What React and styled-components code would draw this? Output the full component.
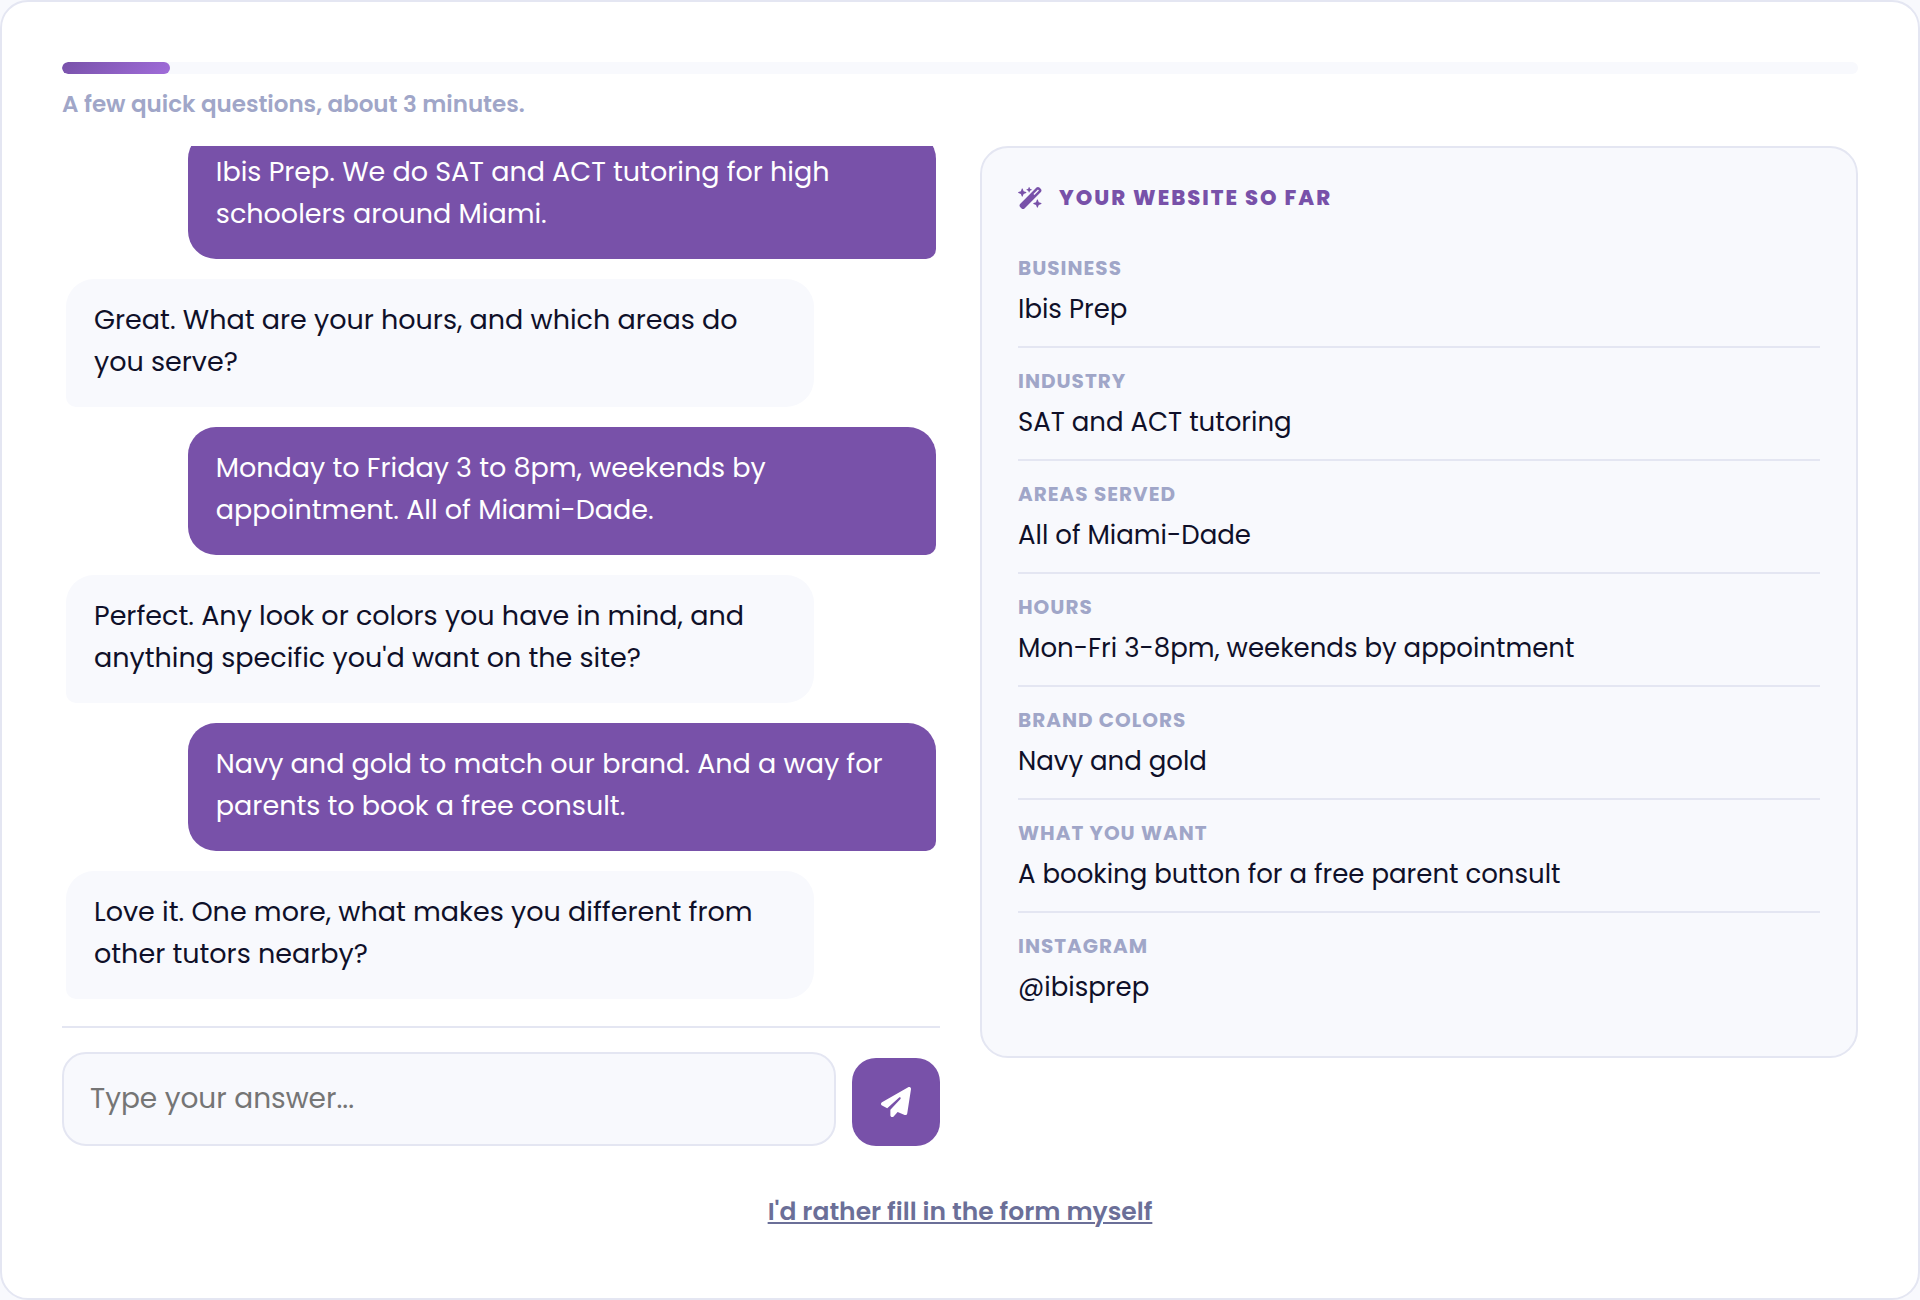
import React, { useLayoutEffect, useRef } from "react";
import styled, { createGlobalStyle } from "styled-components";
import { FaPaperPlane, FaWandMagicSparkles } from "react-icons/fa6";

const color = {
  purple: "#7851a9",
  purpleLight: "#a06cd9",
  surface: "#f8f9fd",
  line: "#e4e6f2",
  ink: "#0f1029",
  muted: "#a0a6c8",
  link: "#6b6f98",
};

const GlobalStyle = createGlobalStyle`
  *, *::before, *::after { box-sizing: border-box; }
  body {
    margin: 0;
    background: ${color.surface};
    color: ${color.ink};
    font-family: Poppins, Inter, "Open Sans", sans-serif;
  }
`;

const Card = styled.main`
  min-height: 100vh;
  padding: 60px;
  background: #fff;
  border: 2px solid ${color.line};
  border-radius: 28px;
`;

const Track = styled.div`
  height: 12px;
  overflow: hidden;
  background: ${color.surface};
  border-radius: 6px;
`;

const Fill = styled.div`
  height: 100%;
  background: linear-gradient(135deg, ${color.purple}, ${color.purpleLight});
  border-radius: 6px;
`;

const Hint = styled.p`
  margin: 12px 0 24px;
  color: ${color.muted};
  font-size: 23px;
  font-weight: 600;
  line-height: 36px;
`;

const Columns = styled.div`
  display: grid;
  grid-template-columns: minmax(0, 1fr) minmax(0, 1fr);
  align-items: start;
  gap: 40px;
`;

const Messages = styled.div`
  display: flex;
  flex-direction: column;
  gap: 20px;
  max-height: 880px;
  padding: 0 4px 27px;
  overflow-y: auto;
  scrollbar-width: none;
`;

const Bubble = styled.p`
  flex: none;
  align-self: ${(p) => (p.$mine ? "flex-end" : "flex-start")};
  width: 86%;
  margin: 0;
  padding: 20px 28px 24px;
  background: ${(p) => (p.$mine ? color.purple : color.surface)};
  border-radius: ${(p) => (p.$mine ? "28px 28px 10px 28px" : "28px 28px 28px 10px")};
  color: ${(p) => (p.$mine ? "#fff" : color.ink)};
  font-size: 27px;
  line-height: 42px;
`;

const Composer = styled.form`
  display: flex;
  align-items: flex-end;
  gap: 16px;
  padding-top: 24px;
  border-top: 2px solid ${color.line};
`;

const Answer = styled.input`
  flex: 1;
  min-width: 0;
  height: 94px;
  padding: 0 26px;
  background: ${color.surface};
  border: 2px solid ${color.line};
  border-radius: 24px;
  color: ${color.ink};
  font-family: inherit;
  font-size: 28px;

  &::placeholder { color: #757575; }
`;

const Send = styled.button`
  display: grid;
  place-items: center;
  flex: none;
  width: 88px;
  height: 88px;
  padding: 0;
  background: ${color.purple};
  border: 0;
  border-radius: 24px;
  color: #fff;
  font-size: 30px;
`;

const Summary = styled.aside`
  padding: 36px 36px 32px;
  background: ${color.surface};
  border: 2px solid ${color.line};
  border-radius: 28px;
`;

const SummaryTitle = styled.h2`
  display: flex;
  align-items: center;
  gap: 16px;
  margin: 0 0 24px;
  color: ${color.purple};
  font-size: 21px;
  font-weight: 800;
  letter-spacing: 2px;
  line-height: 27px;
  text-transform: uppercase;

  svg {
    width: 25px;
    height: 22px;
  }
`;

const Facts = styled.dl`
  margin: 0;
`;

const Fact = styled.div`
  display: grid;
  gap: 4px;
  padding: 16px 0;

  & + & { border-top: 2px solid ${color.line}; }
`;

const FactLabel = styled.dt`
  color: ${color.muted};
  font-size: 20px;
  font-weight: 700;
  letter-spacing: 1px;
  line-height: 34px;
  text-transform: uppercase;
`;

const FactValue = styled.dd`
  margin: 0;
  font-size: 26px;
  line-height: 41px;
`;

const Footer = styled.footer`
  margin-top: 46px;
  text-align: center;
`;

const FormLink = styled.a`
  color: ${color.link};
  font-size: 25px;
  font-weight: 600;
  line-height: 40px;
  text-decoration: underline;
  text-decoration-thickness: 2px;
  text-underline-offset: 2px;
`;

const messages = [
  { mine: true, text: "Ibis Prep. We do SAT and ACT tutoring for high schoolers around Miami." },
  { mine: false, text: "Great. What are your hours, and which areas do you serve?" },
  { mine: true, text: "Monday to Friday 3 to 8pm, weekends by appointment. All of Miami-Dade." },
  { mine: false, text: "Perfect. Any look or colors you have in mind, and anything specific you'd want on the site?" },
  { mine: true, text: "Navy and gold to match our brand. And a way for parents to book a free consult." },
  { mine: false, text: "Love it. One more, what makes you different from other tutors nearby?" },
];

const facts = [
  ["Business", "Ibis Prep"],
  ["Industry", "SAT and ACT tutoring"],
  ["Areas served", "All of Miami-Dade"],
  ["Hours", "Mon-Fri 3-8pm, weekends by appointment"],
  ["Brand colors", "Navy and gold"],
  ["What you want", "A booking button for a free parent consult"],
  ["Instagram", "@ibisprep"],
];

const progress = 6;

export default function App() {
  const list = useRef(null);

  // Keep the newest message in view.
  useLayoutEffect(() => {
    list.current.scrollTop = list.current.scrollHeight;
  }, []);

  return (
    <>
      <GlobalStyle />
      <Card>
        <Track role="progressbar" aria-label="Progress" aria-valuenow={progress} aria-valuemin={0} aria-valuemax={100}>
          <Fill style={{ width: `${progress}%` }} />
        </Track>
        <Hint>A few quick questions, about 3 minutes.</Hint>
        <Columns>
          <section>
            <Messages ref={list}>
              {messages.map((m) => (
                <Bubble key={m.text} $mine={m.mine}>{m.text}</Bubble>
              ))}
            </Messages>
            <Composer onSubmit={(e) => e.preventDefault()}>
              <Answer type="text" aria-label="Your answer" placeholder="Type your answer..." />
              <Send type="submit" aria-label="Send"><FaPaperPlane /></Send>
            </Composer>
          </section>
          <Summary>
            <SummaryTitle><FaWandMagicSparkles /> Your website so far</SummaryTitle>
            <Facts>
              {facts.map(([label, value]) => (
                <Fact key={label}>
                  <FactLabel>{label}</FactLabel>
                  <FactValue>{value}</FactValue>
                </Fact>
              ))}
            </Facts>
          </Summary>
        </Columns>
        <Footer>
          <FormLink href="#form">I'd rather fill in the form myself</FormLink>
        </Footer>
      </Card>
    </>
  );
}
